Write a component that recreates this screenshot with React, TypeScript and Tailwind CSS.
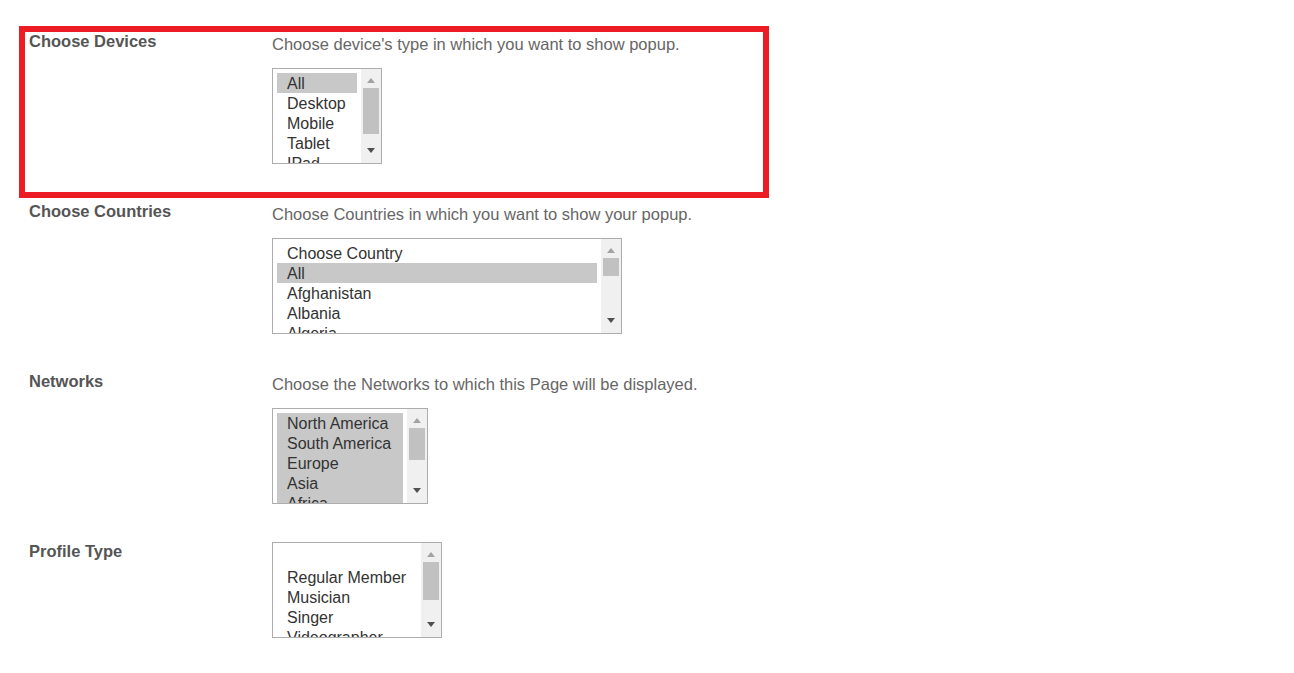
import React from "react";

type Opt = { label: string; selected?: boolean };

function ListBox({ width, options, thumbH }: { width: number; options: Opt[]; thumbH: number }) {
  return (
    <div
      className="flex h-[96px] border border-[#adadad] bg-white"
      style={{ width }}
    >
      <div className="flex-1 overflow-hidden pl-[4px] pr-[4px] pt-[4px]">
        {options.map((o, i) => (
          <div
            key={i}
            className={`h-[20px] pl-[10px] pt-[2px] text-[16px] leading-[18px] whitespace-nowrap text-[#333333] ${
              o.selected ? "bg-[#c8c8c8]" : ""
            }`}
          >
            {o.label || "\u00a0"}
          </div>
        ))}
      </div>
      <div className="relative w-[20px] bg-[#f0f0f0]">
        <svg className="absolute left-[6px] top-[9px]" width="8" height="5" viewBox="0 0 8 5">
          <path d="M0 5 L4 0 L8 5 Z" fill="#a3a3a3" />
        </svg>
        <div
          className="absolute left-[2px] right-[2px] top-[19px] bg-[#c1c1c1]"
          style={{ height: thumbH }}
        />
        <svg className="absolute left-[6px] bottom-[10px]" width="8" height="5" viewBox="0 0 8 5">
          <path d="M0 0 L8 0 L4 5 Z" fill="#505050" />
        </svg>
      </div>
    </div>
  );
}

function Row({
  label,
  desc,
  children,
}: {
  label: string;
  desc?: string;
  children: React.ReactNode;
}) {
  return (
    <div className="flex h-[160px]">
      <div className="w-[247px] shrink-0 pl-[4px] text-[16.5px] font-bold leading-[18px] text-[#555555]">
        {label}
      </div>
      <div className="flex flex-col">
        {desc && (
          <div className="mt-[3px] mb-[15px] whitespace-nowrap text-[16.5px] leading-[18px] text-[#666666]">
            {desc}
          </div>
        )}
        {children}
      </div>
    </div>
  );
}

export default function App() {
  return (
    <div
      className="min-h-[673px] w-full bg-white pl-[19px] pt-[26px]"
      style={{ fontFamily: '"Liberation Sans", Arial, sans-serif' }}
    >
      <div className="w-[750px] border-[6px] border-[#ed1c24]">
        <Row label="Choose Devices" desc="Choose device's type in which you want to show popup.">
          <ListBox
            width={110}
            thumbH={46}
            options={[
              { label: "All", selected: true },
              { label: "Desktop" },
              { label: "Mobile" },
              { label: "Tablet" },
              { label: "IPad" },
            ]}
          />
        </Row>
      </div>
      <div className="mt-[4px] flex flex-col gap-[10px] pl-[6px]">
        <Row label="Choose Countries" desc="Choose Countries in which you want to show your popup.">
          <ListBox
            width={350}
            thumbH={18}
            options={[
              { label: "Choose Country" },
              { label: "All", selected: true },
              { label: "Afghanistan" },
              { label: "Albania" },
              { label: "Algeria" },
            ]}
          />
        </Row>
        <Row label="Networks" desc="Choose the Networks to which this Page will be displayed.">
          <ListBox
            width={156}
            thumbH={32}
            options={[
              { label: "North America", selected: true },
              { label: "South America", selected: true },
              { label: "Europe", selected: true },
              { label: "Asia", selected: true },
              { label: "Africa", selected: true },
            ]}
          />
        </Row>
        <Row label="Profile Type">
          <ListBox
            width={170}
            thumbH={38}
            options={[
              { label: "" },
              { label: "Regular Member" },
              { label: "Musician" },
              { label: "Singer" },
              { label: "Videographer" },
            ]}
          />
        </Row>
      </div>
    </div>
  );
}
